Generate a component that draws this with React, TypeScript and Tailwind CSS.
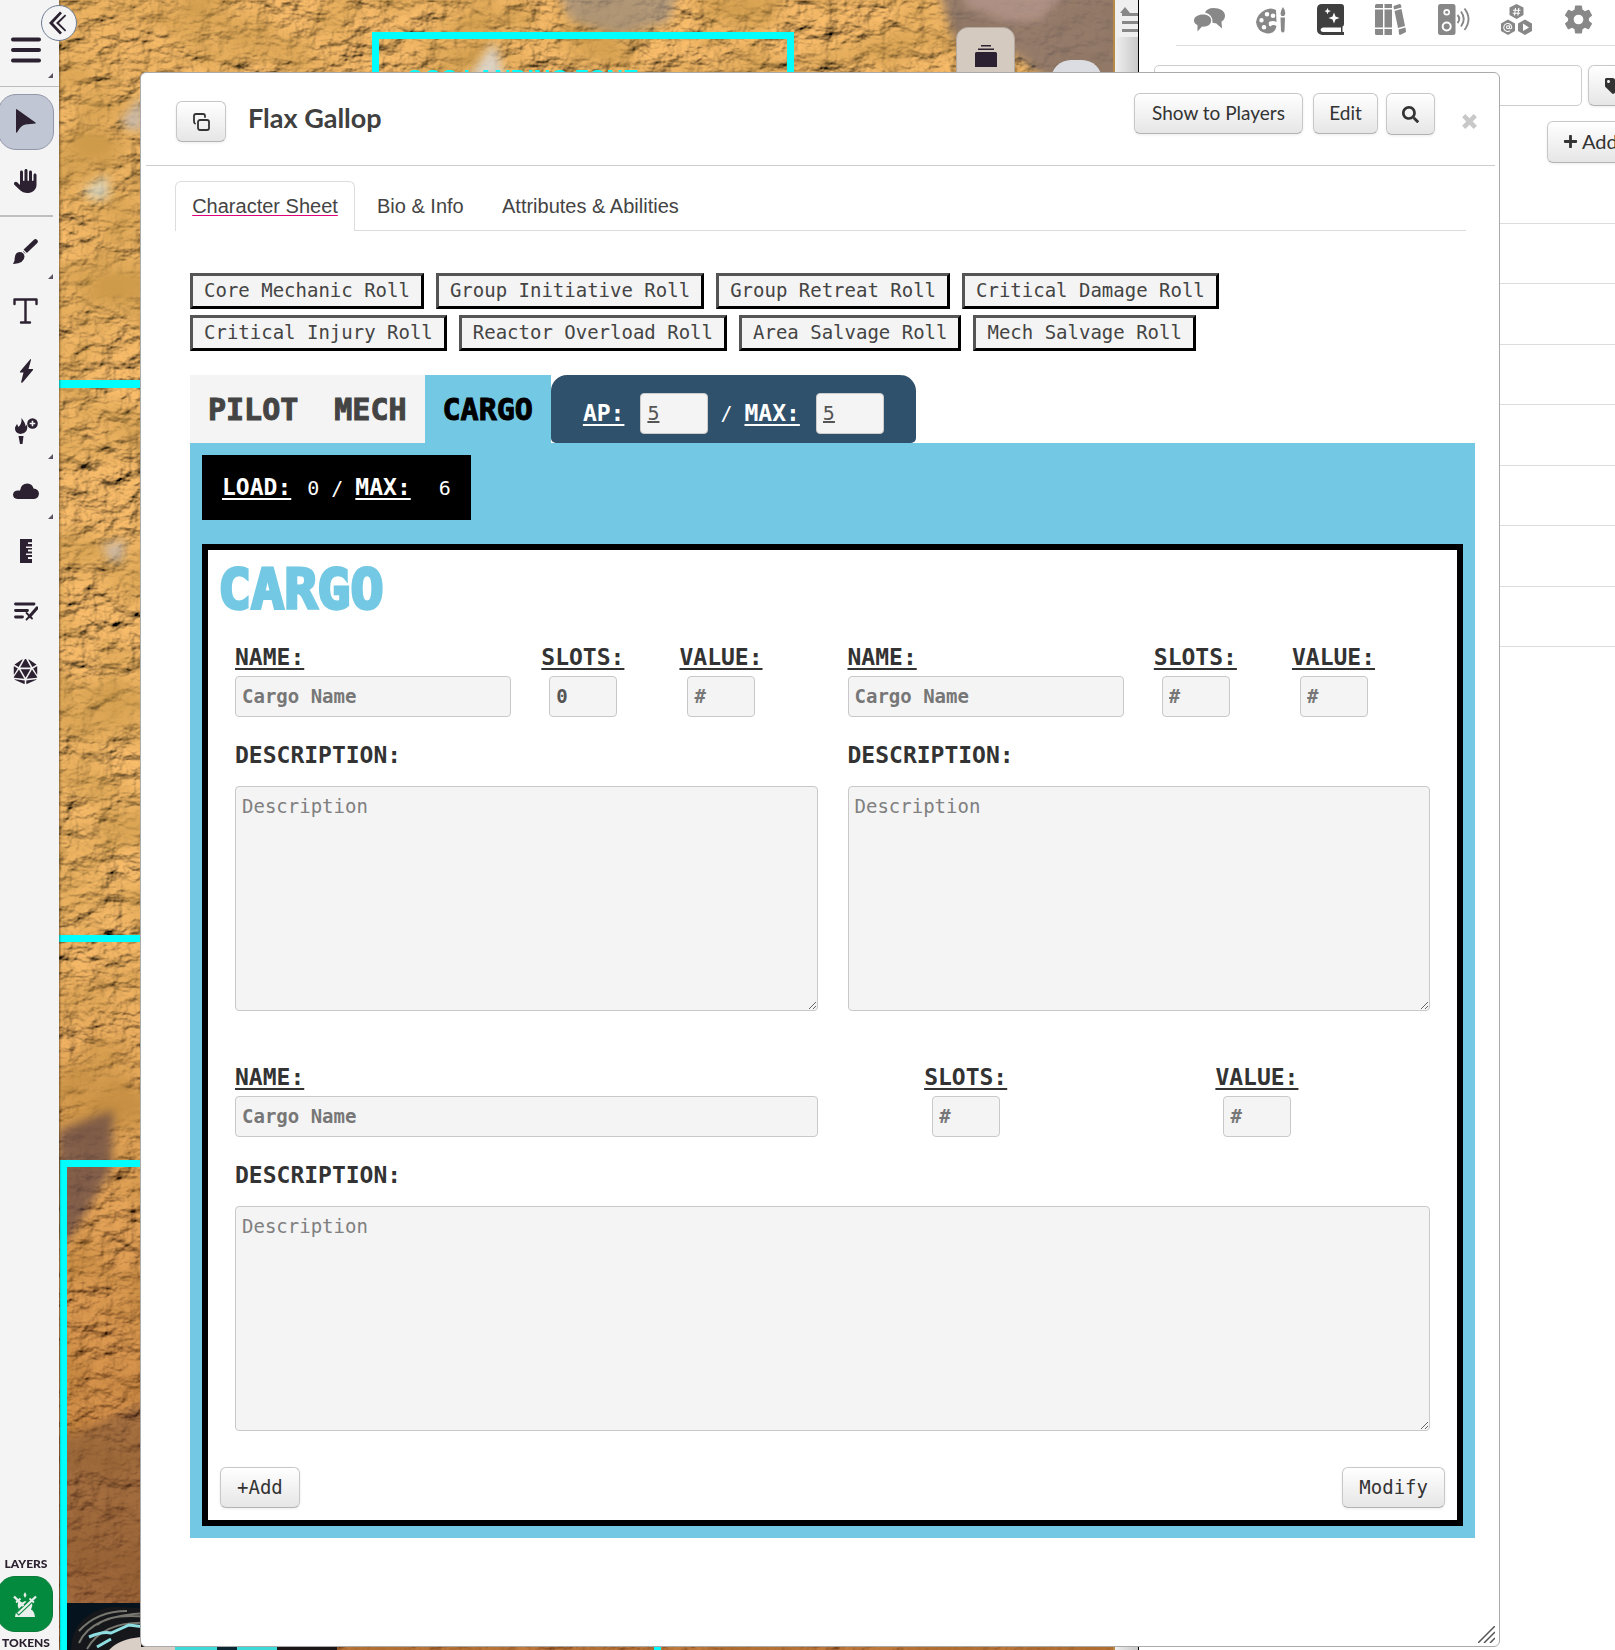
import React, { useId } from "react";
import { FaCloud, FaHand } from "react-icons/fa6";
import { FaDiceD20, FaPlus, FaSearch, FaTags } from "react-icons/fa";
import { IoSettingsSharp } from "react-icons/io5";

const glossy =
  "flex items-center rounded-[6px] border border-[#c8c8c8] border-b-[#b3b3b3] bg-linear-to-b from-white to-[#e6e6e6] text-[#333] shadow-[0_1px_3px_rgba(0,0,0,0.08)]";

function Terrain() {
  return (
    <svg className="absolute inset-0 h-full w-full" aria-hidden="true">
      <defs>
        <filter id="dunes" x="0" y="0" width="100%" height="100%">
          <feTurbulence type="fractalNoise" baseFrequency="0.04 0.06" numOctaves="4" seed="23" result="n" />
          <feDiffuseLighting in="n" surfaceScale="8" diffuseConstant="1.25" lightingColor="#e6b066" result="lit" />
          <feDiffuseLighting in="n" surfaceScale="9" diffuseConstant="1.2" lightingColor="#e6ae62">
            <feDistantLight azimuth="235" elevation="54" />
          </feDiffuseLighting>
          <feGaussianBlur stdDeviation="0.6" />
        </filter>
        <filter id="patches" x="0" y="0" width="100%" height="100%">
          <feTurbulence type="fractalNoise" baseFrequency="0.011 0.015" numOctaves="3" seed="4" />
          <feColorMatrix values="0 0 0 0 0.62  0 0 0 0 0.33  0 0 0 0 0.07  0 2 0 0 -0.75" />
        </filter>
        <linearGradient id="rust" x1="0" y1="0" x2="0" y2="1">
          <stop offset="0.55" stopColor="#a04a10" stopOpacity="0" />
          <stop offset="1" stopColor="#8a3a10" stopOpacity="0.5" />
        </linearGradient>
        <filter id="soft"><feGaussianBlur stdDeviation="5" /></filter>
      </defs>
      <rect width="100%" height="100%" filter="url(#dunes)" />
      <rect width="100%" height="100%" filter="url(#patches)" />
      <rect width="100%" height="100%" fill="url(#rust)" />
      <g filter="url(#soft)">
        <path d="M880 -10H1070V90H1000L950 50L895 40Z" fill="#85726a" opacity="0.85" />
        <path d="M900 -10H1010L980 20L950 22L910 8Z" fill="#bb9a90" opacity="0.7" />
        <path d="M500 -10H620L610 22L560 36L510 20Z" fill="#9b8d80" opacity="0.7" />
        <path d="M435 42L446 80H408Z" fill="#ddd8d0" opacity="0.9" />
        <path d="M62 120L84 95V130L70 130Z" fill="#c4bcb8" opacity="0.8" />
        <path d="M24 190L48 175L50 198L34 200Z" fill="#d9dccb" opacity="0.8" />
        <path d="M44 545L66 540L62 562L50 560Z" fill="#c4bfc2" opacity="0.7" />
        <path d="M0 1130L54 1110L52 1170L10 1240L0 1240Z" fill="#6d5048" opacity="0.8" />
        <path d="M0 1440L90 1400V1610H0Z" fill="#5b3a30" opacity="0.35" />
      </g>
    </svg>
  );
}

function TokenArt() {
  return (
    <svg className="absolute top-[1603px] left-2 h-[47px] w-[580px]" viewBox="0 0 580 47" aria-hidden="true">
      <rect width="220" height="47" fill="#04131d" />
      <path d="M4 47C4 22 22 4 50 4L90 6V47Z" fill="#15171a" />
      <path d="M12 40Q24 12 80 10M20 46Q36 18 80 20M12 28Q30 8 60 8M30 22Q44 10 80 14" fill="none" stroke="#77766f" strokeWidth="2" />
      <path d="M22 34Q36 28 44 30L62 22L78 24M30 44L44 36" fill="none" stroke="#8fdfe2" strokeWidth="3" />
      <path d="M42 47Q52 36 74 34V47Z" fill="#d9cfc6" />
      <rect x="74" y="44" width="34" height="3" fill="#d9cfc6" />
      <rect x="108" y="44" width="120" height="3" fill="#3ddad8" />
      <rect x="150" y="44" width="20" height="3" fill="#0b2630" />
      <rect x="210" y="44" width="60" height="3" fill="#1b1718" />
    </svg>
  );
}

function MapArea() {
  return (
    <div className="relative min-w-0 flex-1 overflow-hidden bg-[#c48a43]">
      <Terrain />
      <div className="absolute top-8 left-[313px] h-[80px] w-[422px] border-[7px] border-[#00ffff]">
        <span className="absolute top-[27px] left-[27px] font-['Liberation_Sans'] text-[23px] leading-[26px] font-bold whitespace-nowrap text-[#00ffff]">
          OOS LANDING ZONE
        </span>
      </div>
      <div className="absolute top-[380px] left-0 h-2 w-full bg-[#00ffff]" />
      <div className="absolute top-[935px] left-0 h-[7px] w-full bg-[#00ffff]" />
      <div className="absolute top-[1160px] left-[1px] h-[500px] w-[601px] border-[7px] border-b-0 border-[#00ffff]" />
      <TokenArt />
      <div className="absolute top-[27px] right-[98px] flex h-20 w-[59px] justify-center rounded-t-[12px] border border-[#b5a9a0] bg-[#d5cabf]">
        <svg className="mt-[17px] h-[24px] w-[24px]" viewBox="0 0 24 24" fill="#2b2130" aria-hidden="true">
          <path d="M7 0h10v1.6H7zM4 3.4h16V5H4zM1 8.5Q1 7 2.500 7h19Q23 7 23 8.500V22H1z" />
        </svg>
      </div>
      <div className="absolute top-[60px] right-[11px] h-10 w-[51px] rounded-t-[20px] bg-[#dcdde3]" />
    </div>
  );
}

function Corner() {
  return (
    <svg className="absolute right-0 bottom-[2px] h-[5px] w-[5px]" viewBox="0 0 5 5" fill="#5a5262" aria-hidden="true">
      <path d="M5 0V5H0Z" />
    </svg>
  );
}

function Tool({ label, corner, children }: { label: string; corner?: boolean; children: React.ReactNode }) {
  return (
    <button type="button" aria-label={label} className="relative flex h-[60px] w-[53px] items-center justify-center pr-[2px] text-[#2b2130]">
      {children}
      {corner && <Corner />}
    </button>
  );
}

function Toolbar() {
  return (
    <nav aria-label="Tools" className="relative z-10 flex w-[59px] shrink-0 flex-col bg-[#f4f4f4] font-['Lato',sans-serif] text-[#2b2130] shadow-[1px_0_2px_rgba(0,0,0,0.4)]">
      <button type="button" aria-label="Collapse toolbar" className="absolute top-[5px] left-[41px] flex h-9 w-9 items-center justify-center rounded-full border border-[#6b7a90] bg-[#f4f4f4]">
        <svg className="mr-[2px] h-6 w-[18px]" viewBox="0 0 18 24" fill="#2b2130" aria-hidden="true">
          <path d="M11 0.500L13 2.300L4 12L13 21.700L11 23.500L0 12Z" />
          <path d="M16 3.500L17.200 4.800L10 12L17.200 19.200L16 20.500L7 12Z" />
        </svg>
      </button>
      <div className="flex h-[87px] flex-col border-b border-[#bcbcbc] pt-[20px]">
        <Tool label="Menu" corner>
          <svg className="h-[26px] w-[30px]" viewBox="0 0 30 26" fill="none" stroke="#2b2130" strokeWidth="4" strokeLinecap="round" aria-hidden="true">
            <path d="M2 2.500H28M2 13H28M2 23.500H28" />
          </svg>
        </Tool>
      </div>
      <div className="pt-1">
        <div className="relative flex">
          <div className="absolute top-[3px] -left-[2px] h-14 w-14 rounded-[18px] border border-[#9297a9] bg-[#c0c6d4]" />
          <Tool label="Select">
            <svg className="h-6 w-5" viewBox="0 0 20 24" fill="#2b2130" aria-hidden="true">
              <path d="M0.500 0Q0 0 0 1V23Q0 24 1 23.500Q5 16 9.500 15.500L19.500 14.500Q20 14 19.500 13.500Z" />
            </svg>
          </Tool>
        </div>
        <Tool label="Pan"><FaHand size={24} /></Tool>
      </div>
      <div className="mt-[4px] mb-[4px] h-[2px] w-[53px] bg-[#bfbfbf]" />
      <Tool label="Draw" corner>
        <svg className="h-[25px] w-[25px]" viewBox="0 0 25 25" fill="#2b2130" aria-hidden="true">
          <path d="M22.500 2.500L12.500 12" stroke="#2b2130" strokeWidth="4.600" strokeLinecap="round" />
          <path d="M9.500 10.500L14.500 15.500" stroke="#f4f4f4" strokeWidth="1.200" />
          <path d="M6.500 13Q11 13 11.500 17.500Q11.500 24 0.500 25Q-0.300 25 0.500 24Q1.800 22 1.800 18.500Q2.300 13.300 6.500 13Z" />
        </svg>
      </Tool>
      <Tool label="Text">
        <svg className="h-[26px] w-[25px]" viewBox="0 0 25 26" fill="none" stroke="#2b2130" strokeWidth="2.400" strokeLinecap="round" strokeLinejoin="round" aria-hidden="true">
          <path d="M1.500 6V1.500H23.500V6M12.500 1.500V24M8 24.500H17" />
        </svg>
      </Tool>
      <Tool label="Effects">
        <svg className="h-6 w-4" viewBox="0 0 16 24" fill="#2b2130" aria-hidden="true">
          <path d="M12.500 0L2 12.500Q1.500 13.500 2.500 13.500H5.500L3 23.500Q4 24 5 23L15 11Q15.500 10 14.500 10H10.500L13 1Q13 0 12.500 0Z" />
        </svg>
      </Tool>
      <Tool label="Lighting" corner>
        <svg className="h-[26px] w-[24px]" viewBox="0 0 24 26" fill="#2b2130" aria-hidden="true">
          <path d="M7.500 0Q12 6 11.500 8.500L13 6.500Q15 15 6.500 16Q0.500 15 1 9.500L3 6L4.500 9Q8 6 7.500 0ZM4.500 18H9.500L8.500 26H6Z" />
          <circle cx="18.500" cy="5.500" r="5.300" />
          <path d="M17.700 2.700h1.600v5.600h-1.600zM15.700 4.700h5.600v1.600h-5.600z" fill="#f4f4f4" />
        </svg>
      </Tool>
      <Tool label="Fog" corner>
        <svg className="h-4 w-[26px]" viewBox="0 0 26 16" fill="#2b2130" aria-hidden="true">
          <path d="M4.500 16Q0 15.500 0 11.500Q0.500 7.500 5 7.500H7Q8 0.500 14.500 0.500Q19.500 1 20.500 5.500Q25.500 6 26 10.500Q25.500 15.500 21 16Z" />
        </svg>
      </Tool>
      <Tool label="Measure">
        <svg className="h-6 w-3" viewBox="0 0 12 24" fill="#2b2130" aria-hidden="true">
          <path d="M0 0H12V3.300H8V5H12V7.500H6V9H12V10.500H8V12.500H12V14.500H6V16H12V18H8V20H12V24H0Z" />
        </svg>
      </Tool>
      <Tool label="Turn order">
        <svg className="h-5 w-6" viewBox="0 0 24 20" fill="none" stroke="#2b2130" strokeWidth="2.800" strokeLinecap="round" aria-hidden="true">
          <path d="M1.500 3H20M1.500 9.500H13.500M1.500 16H8.500" />
          <path d="M23 7L15.500 15.500" strokeWidth="3.200" />
          <path d="M12.500 12L18 17.500M12.500 18.500L16 15" strokeWidth="1.800" />
        </svg>
      </Tool>
      <Tool label="Dice"><FaDiceD20 size={25} /></Tool>
      <div className="mt-auto flex w-[52px] flex-col items-center pt-4 text-[12px] leading-4 font-black">
        <span>LAYERS</span>
        <button type="button" aria-label="Token layer" className="mt-1 -ml-[2px] flex h-14 w-14 items-center justify-center rounded-[18px] border border-[#0a7a38] bg-[#048a3f]">
          <svg className="h-[25px] w-6" viewBox="0 0 24 25" fill="#e9efea" aria-hidden="true">
            <path d="M12 0L13.500 3L12 6L10.500 3Z" />
            <path d="M2 25Q2.500 19 6 17.500Q4 14 5 10Q8 12 12 9Q16 12 19 10Q20 14 18 17.500Q21.500 19 22 25Z" />
            <path d="M23 4L4 22" stroke="#048a3f" strokeWidth="5" />
            <path d="M23 4.500L5 21.500M1 4.500L10.500 14" stroke="#e9efea" strokeWidth="2.400" fill="none" />
            <path d="M3 10.500L7.500 6.500M21 10.500L16.500 6.500" stroke="#e9efea" strokeWidth="1.800" fill="none" />
          </svg>
        </button>
        <span className="mt-[3px] mb-[-1px]">TOKENS</span>
      </div>
    </nav>
  );
}

function Sidebar() {
  return (
    <aside className="relative w-[477px] shrink-0 overflow-hidden border-l border-black bg-white font-['Lato',sans-serif]">
      <div className="ml-[37px] flex h-[46px] items-start border-b border-[#dcdcdc] pt-1 text-[#888]">
        <div className="flex w-full items-center justify-between pr-[21px] pl-[18px]">
          <button type="button" aria-label="Chat">
            <svg className="h-[26px] w-[31px]" viewBox="0 0 31 26" fill="currentColor" aria-hidden="true">
              <path d="M19.500 1C26 1 31 4 31 8.500Q31 12.500 27.500 14.500L28 21.500L22 16.200Q19.500 16.300 18.500 15.800Q19.500 8 11 5.500Q13 1.200 19.500 1Z" />
              <path d="M9 7.500C14 7.500 17.200 10 17.200 13.500Q17 19.500 9 19.700L8 19.600L3.500 24.500V18Q0 16.500 0 13.500C0 10 4 7.500 9 7.500Z" />
            </svg>
          </button>
          <button type="button" aria-label="Art library">
            <svg className="h-[30px] w-[30px]" viewBox="0 0 30 30" fill="currentColor" aria-hidden="true">
              <path fillRule="evenodd" d="M20 5Q15 2 9 5Q1 9 0 17Q1 27 11 28.500Q19 29 20.500 21Q17 19 14.500 21.500Q12 21 13 17Q17 15 20.500 17ZM11 7a2.300 2.300 0 1 1 0 4.600a2.300 2.300 0 0 1 0-4.600M5.500 13a2.200 2.200 0 1 1 0 4.400a2.200 2.200 0 0 1 0-4.400M17 8.500a2.300 2.300 0 1 1 0 4.600a2.300 2.300 0 0 1 0-4.600M8 20a2.300 2.300 0 1 1 0 4.600a2.300 2.300 0 0 1 0-4.600" />
              <path d="M27 2Q31 8 28 11H25.500Q23 8 27 2ZM24.500 12.500H29L28.500 26Q27 29 25 26Z" />
            </svg>
          </button>
          <button type="button" aria-label="Journal" className="text-[#3f3f3f]">
            <svg className="h-[31px] w-[27px]" viewBox="0 0 27 31" fill="currentColor" aria-hidden="true">
              <path fillRule="evenodd" d="M5 0H24Q27 0 27 3V20Q27 22 25.500 22.500V28H27V31H5Q0 30 0 26V5Q0 0 5 0ZM6 23.500Q3.500 24 3.500 26Q4 28 6 28H24V23.500ZM17 8.500L18.500 12.500L22.500 14L18.500 15.500L17 19.500L15.500 15.500L11.500 14L15.500 12.500ZM10.500 4L11.500 6.300L14 7L11.500 8L10.500 10.300L9.500 8L7.500 7L9.500 6.300Z" />
            </svg>
          </button>
          <button type="button" aria-label="Compendium">
            <svg className="h-[31px] w-[31px]" viewBox="0 0 31 31" fill="currentColor" aria-hidden="true">
              <path d="M0 1.500Q0 0 1.500 0H8V4H0ZM0 5.500H8V23.500H0ZM0 25H8V31H1.500Q0 31 0 29.500ZM9.500 0H17V4H9.500ZM9.500 5.500H17V23.500H9.500ZM9.500 25H17V31H9.500ZM18.500 2L24.500 0Q25.500 0 26 1L26.500 3.500L19 5.500ZM19.500 7L26.500 5L30 22L23 24ZM23.500 25.500L30.500 23.500L31 28L25 31Q24.500 31 24 30Z" />
            </svg>
          </button>
          <button type="button" aria-label="Jukebox">
            <svg className="h-[31px] w-[32px]" viewBox="0 0 32 31" fill="currentColor" aria-hidden="true">
              <path fillRule="evenodd" d="M2.500 0H15Q17.500 0 17.500 2.500V28.500Q17.500 31 15 31H2.500Q0 31 0 28.500V2.500Q0 0 2.500 0ZM8.700 5a3.300 3.300 0 1 1 0 6.600a3.300 3.300 0 0 1 0-6.600M8.700 17.500a5 5 0 1 1 0 10a5 5 0 0 1 0-10" />
              <circle cx="8.700" cy="8.300" r="1.500" /><circle cx="8.700" cy="22.500" r="3" />
              <path d="M19.500 11Q23 15 19.500 19M23 7.500Q28.500 15 23 22.500M26.500 4.500Q34.500 15 26.500 26" fill="none" stroke="currentColor" strokeWidth="1.900" />
            </svg>
          </button>
          <button type="button" aria-label="Collections">
            <svg className="h-[31px] w-[31px]" viewBox="0 0 31 31" fill="currentColor" aria-hidden="true">
              <path d="M15.500 0L22.500 3.500V11L15.500 15L8.500 11V3.500ZM7 15.500L14 19.500V27L7 31L0 27V19.500ZM24 15.500L31 19.500V27L24 31L17 27V19.500Z" />
              <path d="M14.500 4L13.500 11.500M17.800 4L16.800 11.500M12 6.300H19.500M11.700 9.300H19" stroke="#fff" strokeWidth="1.100" fill="none" />
              <circle cx="7" cy="23.300" r="1.500" fill="none" stroke="#fff" strokeWidth="1.100" />
              <path d="M8.500 21.500V24Q9.500 25.500 10.700 24A4 4 0 1 0 9 26.800" fill="none" stroke="#fff" strokeWidth="1.100" />
              <path d="M22 19.500L28 23.500L22 27Z" fill="#fff" />
            </svg>
          </button>
          <button type="button" aria-label="Settings"><IoSettingsSharp size={31} /></button>
        </div>
      </div>
      <div className="flex w-[520px] gap-1.5 pt-[19px] pl-[15px]">
        <input aria-label="Search journal" className="h-[41px] w-[428px] rounded-[5px] border border-[#ccc] bg-white px-2" />
        <button type="button" aria-label="Tags" className={`${glossy} h-[41px] w-[60px] pl-4`}><FaTags size={20} /></button>
      </div>
      <div className="flex w-[520px] pt-[15px] pl-[408px]">
        <button type="button" className={`${glossy} h-[42px] w-[90px] gap-1 pb-[2px] pl-[15px] text-[20px]`}><FaPlus size={15} />Add</button>
      </div>
      <ul className="mt-[60px] ml-[15px] flex h-[424px] flex-col justify-between">
        {Array.from({ length: 8 }, (_, i) => (
          <li key={i} className="border-t border-[#dcdcdc]" />
        ))}
      </ul>
    </aside>
  );
}

const underlined = "underline decoration-2 underline-offset-3";

function NameField({ label, placeholder, value, wide }: { label: string; placeholder?: string; value?: string; wide?: boolean }) {
  const id = useId();
  return (
    <div className="flex flex-col">
      <label htmlFor={id} className={`text-[23px] leading-[34px] font-bold ${underlined}`}>{label}</label>
      <input
        id={id}
        defaultValue={value}
        placeholder={placeholder}
        className={`${wide ? "w-full" : "ml-2 w-[68px]"} mt-[2px] h-[41px] rounded-[4px] border border-[#c9c9c9] bg-[#f4f4f4] px-1.5 pb-[2px] text-[19px] font-bold text-[#555] placeholder:text-[#777]`}
      />
    </div>
  );
}

function CargoItem({ slots, full }: { slots?: string; full?: boolean }) {
  const id = useId();
  return (
    <li className={full ? "col-span-2" : ""}>
      <div className="grid grid-cols-2">
        <div className="pr-[15px]"><NameField wide label="NAME:" placeholder="Cargo Name" /></div>
        <div className="ml-[15px] grid grid-cols-2 justify-items-center">
          <div className="w-[138px]"><NameField label="SLOTS:" placeholder="#" value={slots} /></div>
          <div className="w-[138px]"><NameField label="VALUE:" placeholder="#" /></div>
        </div>
      </div>
      <label htmlFor={id} className="mt-5 block text-[23px] leading-9 font-bold">DESCRIPTION:</label>
      <textarea
        id={id}
        placeholder="Description"
        className="mt-[13px] block h-[225px] w-full resize rounded-[4px] border border-[#c9c9c9] bg-[#f4f4f4] px-1.5 py-1.5 text-[19px] leading-[27px] placeholder:text-[#808080]"
      />
    </li>
  );
}

const rolls = [
  "Core Mechanic Roll", "Group Initiative Roll", "Group Retreat Roll", "Critical Damage Roll",
  "Critical Injury Roll", "Reactor Overload Roll", "Area Salvage Roll", "Mech Salvage Roll",
];

const apInput = "h-[41px] w-[68px] rounded-[4px] border border-[#ccc] bg-[#f4f4f4] px-1.5 text-[20px] text-[#555] underline";

function Sheet() {
  return (
    <div className="mt-[42px] ml-6 font-['DejaVu_Sans_Mono',monospace] text-[#333]">
      <div className="flex flex-wrap gap-x-3 gap-y-1.5 pr-12">
        {rolls.map((r) => (
          <button key={r} type="button" className="h-9 border-3 border-t-[#555] border-r-black border-b-black border-l-[#555] bg-[#f4f4f4] px-[11px] pb-[2px] text-[19px] leading-[28px] text-[#444]">
            {r}
          </button>
        ))}
      </div>
      <div className="mt-6 flex h-[68px]">
        {["PILOT", "MECH", "CARGO"].map((t) => (
          <button
            key={t}
            type="button"
            className={`px-[18px] text-[30px] font-bold ${t === "CARGO" ? "bg-[#73c8e4] text-black" : "bg-[#f4f4f4] text-[#444]"} [-webkit-text-stroke:1px_currentColor]`}
          >
            {t}
          </button>
        ))}
        <div className="flex items-center rounded-t-[16px] rounded-b-[5px] bg-[#30516b] px-8 pt-2 text-[23px] text-white">
          <label htmlFor="ap" className={`mr-4 font-bold ${underlined}`}>AP:</label>
          <input id="ap" defaultValue="5" className={apInput} />
          <span className="mx-3 text-[20px]">/</span>
          <label htmlFor="apmax" className={`mr-4 font-bold ${underlined}`}>MAX:</label>
          <input id="apmax" defaultValue="5" className={apInput} />
        </div>
      </div>
      <div className="bg-[#73c8e4] p-3">
        <div className="inline-flex h-[65px] items-center bg-black px-5 text-[20px] text-white">
          <span className={`text-[23px] font-bold ${underlined}`}>LOAD:</span>
          <span className="ml-4">0</span>
          <span className="ml-3">/</span>
          <span className={`ml-3 text-[23px] font-bold ${underlined}`}>MAX:</span>
          <span className="ml-7">6</span>
        </div>
        <section className="mt-6 border-6 border-black bg-white px-3 pb-3">
          <h2 className="-ml-[2px] pt-[9px] text-[55px] leading-[60px] font-bold text-[#73c8e4] [-webkit-text-stroke:3px_currentColor]">CARGO</h2>
          <ul className="mx-[15px] mt-[21px] grid grid-cols-2 gap-x-[30px] gap-y-[49px]">
            <CargoItem slots="0" />
            <CargoItem />
            <CargoItem full />
          </ul>
          <div className="mt-9 flex justify-between text-[19px]">
            <button type="button" className={`${glossy} h-[41px] px-4`}>+Add</button>
            <button type="button" className={`${glossy} h-[41px] px-4`}>Modify</button>
          </div>
        </section>
      </div>
    </div>
  );
}

function CharacterDialog() {
  return (
    <div role="dialog" aria-label="Flax Gallop" className="relative z-20 col-start-1 row-start-1 mt-[72px] mr-[115px] mb-[3px] ml-[140px] min-w-0 rounded-[6px] border border-[#aaa] bg-white pb-[108px] pl-px font-['Lato',sans-serif]">
      <header className="mx-1 flex h-[93px] items-start border-b border-[#ccc] pr-[18px] pl-[30px]">
        <button type="button" aria-label="Pop out" className={`${glossy} mt-[28px] h-[41px] w-[50px] justify-center`}>
          <svg className="h-[18px] w-[17px]" viewBox="0 0 17 18" fill="none" stroke="#333" strokeWidth="1.800" strokeLinejoin="round" strokeLinecap="round" aria-hidden="true">
            <rect x="5" y="7" width="11" height="10" rx="2" />
            <path d="M2 10.500Q1 10 1 8.500V3Q1 1 3 1H10Q12 1 12 3V4" />
          </svg>
        </button>
        <h1 className="mt-7 ml-[22px] text-[27px] leading-[34px] font-bold text-[#404040]">Flax Gallop</h1>
        <div className="mt-5 ml-auto flex items-start text-[19px]">
          <button type="button" className={`${glossy} h-[41px] w-[169px] justify-center`}>Show to Players</button>
          <button type="button" className={`${glossy} ml-[10px] h-[41px] w-[65px] justify-center`}>Edit</button>
          <button type="button" aria-label="Search" className={`${glossy} ml-2 h-[42px] w-[49px] justify-center`}><FaSearch size={17} /></button>
          <button type="button" aria-label="Close" className="mt-[21px] ml-[27px]">
            <svg className="h-[15px] w-[15px]" viewBox="0 0 15 15" stroke="#c8c8c8" strokeWidth="4.600" aria-hidden="true"><path d="M1.700 1.700L13.300 13.300M13.300 1.700L1.700 13.300" /></svg>
          </button>
        </div>
      </header>
      <nav className="mr-[33px] ml-[33px] flex h-[65px] items-end border-b border-[#ddd] font-['Liberation_Sans',Arial,sans-serif] text-[20px] text-[#444]">
        <a href="#sheet" className="-mb-px flex h-[50px] w-[180px] items-center justify-center rounded-t-[6px] border border-b-0 border-[#ddd] bg-white pb-[2px]"><span className="underline decoration-[#e0007a] decoration-1 underline-offset-2">Character Sheet</span></a>
        <a href="#bio" className="ml-[22px] flex h-[48px] w-[85px] items-center whitespace-nowrap">Bio &amp; Info</a>
        <a href="#attributes" className="ml-10 flex h-[48px] items-center">Attributes &amp; Abilities</a>
      </nav>
      <div className="mx-6">
        <Sheet />
      </div>
      <svg className="absolute right-1 bottom-[3px] h-[17px] w-[17px]" viewBox="0 0 17 17" stroke="#555" strokeWidth="1.500" aria-hidden="true">
        <path d="M0 17L17 0M6 17L17 6M12 17L17 12" />
      </svg>
    </div>
  );
}

export default function App() {
  return (
    <div className="grid min-h-screen overflow-hidden">
      <div className="col-start-1 row-start-1 flex min-w-0">
        <Toolbar />
        <MapArea />
        <div className="w-[25px] shrink-0 border-l-2 border-[#b98a45] bg-linear-to-r from-[#f0f0f0] to-[#c8c8c8]">
          <div className="h-[37px] overflow-hidden bg-[#efefef] pt-[7px] pl-[5px]">
            <svg className="h-[26px] w-[18px]" viewBox="0 0 18 26" fill="#888" aria-hidden="true">
              <path d="M0 6L5 0L10 6ZM2 6H18V9H2ZM2 14H18V17H2ZM2 22H18V25H2Z" />
            </svg>
          </div>
        </div>
        <Sidebar />
      </div>
      <CharacterDialog />
    </div>
  );
}
